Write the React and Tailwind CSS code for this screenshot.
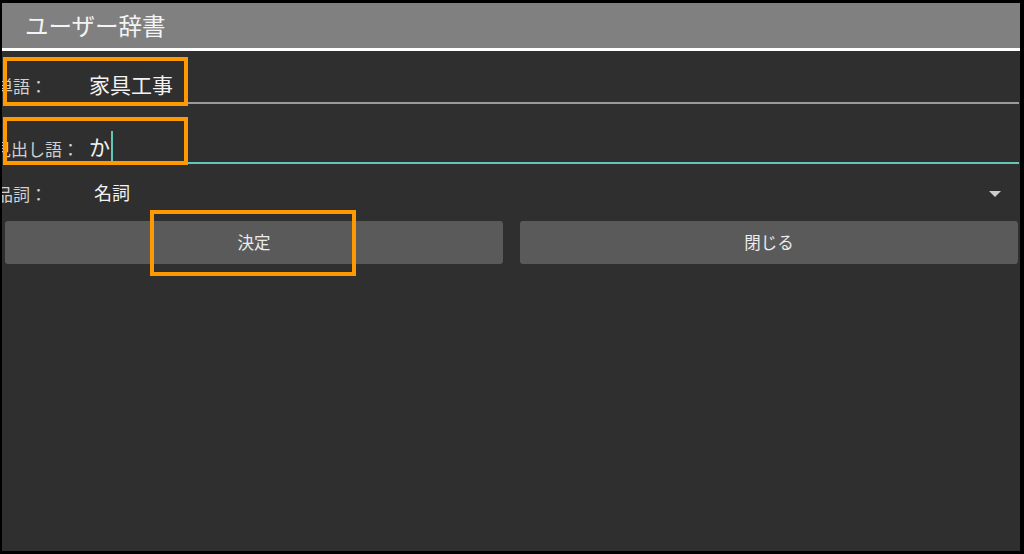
import React from 'react';

const font = { fontFamily: '"Noto Sans CJK JP", "Noto Sans", sans-serif' };

const UserDictionaryDialog = () => {
  return (
    <div
      className="relative w-[1024px] h-[554px] bg-black pl-[2px] pt-[3px] pr-[4px] pb-[3px] overflow-hidden"
      style={font}
    >
      <div className="h-full bg-[#2f2f2f] flex flex-col overflow-hidden">
        {/* Title bar */}
        <div className="h-[45px] bg-[#808080] flex items-center pl-[23px] text-[23.5px] leading-none text-[#f4f4f4]">
          ユーザー辞書
        </div>
        <div className="h-[3px] bg-white" />

        {/* 単語 */}
        <div className="h-[53px] flex pr-[1px]">
          <div className="w-[87px] shrink-0 pt-[24px]">
            <div className="-ml-[6px] text-[17px] leading-[22px] text-[#d0d0d0] whitespace-nowrap">単語：</div>
          </div>
          <div className="flex-1 border-b-2 border-[#9b9b9b] pt-[19px]">
            <div className="text-[21px] leading-[28px] text-[#f2f2f2]">家具工事</div>
          </div>
        </div>

        {/* 見出し語 */}
        <div className="h-[60px] flex pr-[1px]">
          <div className="w-[87px] shrink-0 pt-[34px]">
            <div className="-ml-[8px] text-[17px] leading-[22px] text-[#d0d0d0] whitespace-nowrap">見出し語：</div>
          </div>
          <div className="flex-1 border-b-2 border-[#62c6b8] pt-[27px]">
            <div className="flex items-center h-[30px] text-[21px] leading-[28px] text-[#f2f2f2]">
              か
              <span className="ml-[1px] w-[2px] h-[30px] bg-[#62c6b8]" />
            </div>
          </div>
        </div>

        {/* 品詞 */}
        <div className="h-[50px] flex pr-[1px]">
          <div className="w-[87px] shrink-0 pt-[19px]">
            <div className="-ml-[6px] text-[17px] leading-[22px] text-[#d0d0d0] whitespace-nowrap">品詞：</div>
          </div>
          <div className="flex-1 flex justify-between pl-[5px] pt-[16px] pr-[18px]">
            <div className="text-[18px] leading-[24px] text-[#f2f2f2]">名詞</div>
            <svg width="12" height="6" viewBox="0 0 12 6" className="mt-[11px]">
              <path d="M0 0 L12 0 L6 6 Z" fill="#cdcdcd" />
            </svg>
          </div>
        </div>

        {/* Buttons */}
        <div className="flex gap-[17px] pt-[7px] pl-[3px] pr-[2px]">
          <button className="flex-1 h-[43px] rounded-[3px] bg-[#5a5a5a] text-[16.5px] text-[#ececec]">決定</button>
          <button className="flex-1 h-[43px] rounded-[3px] bg-[#5a5a5a] text-[16.5px] text-[#ececec]">閉じる</button>
        </div>
      </div>

      {/* Annotation highlights */}
      <div className="absolute left-[3px] top-[57px] w-[185px] h-[49px] border-[4px] border-[#ff9900]" />
      <div className="absolute left-[3px] top-[117px] w-[185px] h-[48px] border-[4px] border-[#ff9900]" />
      <div className="absolute left-[150px] top-[210px] w-[206px] h-[66px] border-[4px] border-[#ff9900]" />
    </div>
  );
};

export default function App() {
  return <UserDictionaryDialog />;
}
